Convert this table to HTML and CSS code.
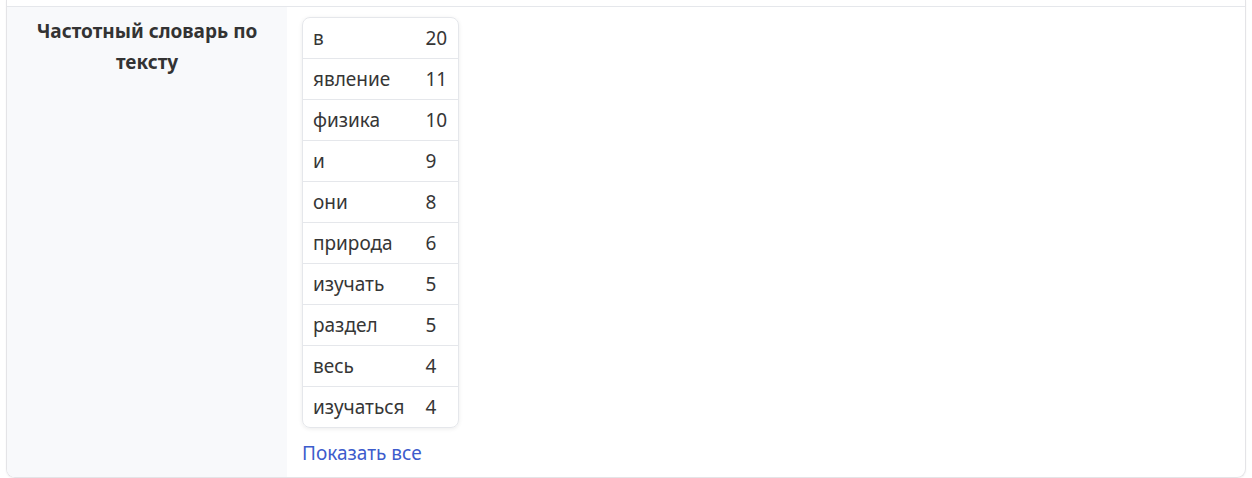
FILE: index.html
```html
<!DOCTYPE html>
<html lang="ru">
<head>
<meta charset="utf-8">
<link rel="stylesheet" href="styles.css">
</head>
<body>
<div class="card">
  <div class="top-strip"></div>
  <div class="row">
    <div class="label">Частотный словарь по тексту</div>
    <div class="value">
      <table class="freq">
        <tr><td>в</td><td>20</td></tr>
        <tr><td>явление</td><td>11</td></tr>
        <tr><td>физика</td><td>10</td></tr>
        <tr><td>и</td><td>9</td></tr>
        <tr><td>они</td><td>8</td></tr>
        <tr><td>природа</td><td>6</td></tr>
        <tr><td>изучать</td><td>5</td></tr>
        <tr><td>раздел</td><td>5</td></tr>
        <tr><td>весь</td><td>4</td></tr>
        <tr><td>изучаться</td><td>4</td></tr>
      </table>
      <a class="show-all" href="#">Показать все</a>
    </div>
  </div>
</div>
</body>
</html>
```
FILE: styles.css
```css
html, body {
  margin: 0;
  padding: 0;
  background: #ffffff;
}
body {
  font-family: "Noto Sans", "DejaVu Sans", sans-serif;
  color: #363636;
  padding: 0 6px;
  height: 478px;
  overflow: hidden;
}
.card {
  border: 1px solid #e4e4e7;
  border-top: none;
  border-radius: 0 0 9px 9px;
  overflow: hidden;
  box-shadow: 0 1px 2px rgba(0,0,0,0.06);
}
.top-strip {
  height: 6px;
}
.row {
  display: flex;
  border-top: 1px solid #e5e7eb;
  height: 470px;
}
.label {
  width: 280px;
  flex: none;
  background: #f8f9fb;
  font-weight: 700;
  font-size: 19px;
  line-height: 31px;
  text-align: center;
  padding: 9px 10px 0;
  box-sizing: border-box;
  color: #333333;
}
.value {
  flex: 1;
  padding: 10px 15px 0;
  display: flex;
  flex-direction: column;
  align-items: flex-start;
}
.freq {
  border-collapse: separate;
  border-spacing: 0;
  border: 1px solid #e5e7eb;
  border-radius: 8px;
  box-shadow: 0 1px 4px rgba(0,0,0,0.08);
  font-size: 19px;
}
.freq td {
  height: 41px;
  padding: 0 10px;
  border-top: 1px solid #e5e7eb;
  box-sizing: border-box;
  vertical-align: middle;
  white-space: nowrap;
}
.freq td:first-child {
  padding-right: 11px;
}
.freq td:last-child {
  padding-right: 11px;
}
.freq tr:first-child td {
  border-top: none;
  height: 40px;
}
.show-all {
  margin-top: 12px;
  color: #3d5ccc;
  text-decoration: none;
  font-size: 19px;
  line-height: 26px;
}
```
